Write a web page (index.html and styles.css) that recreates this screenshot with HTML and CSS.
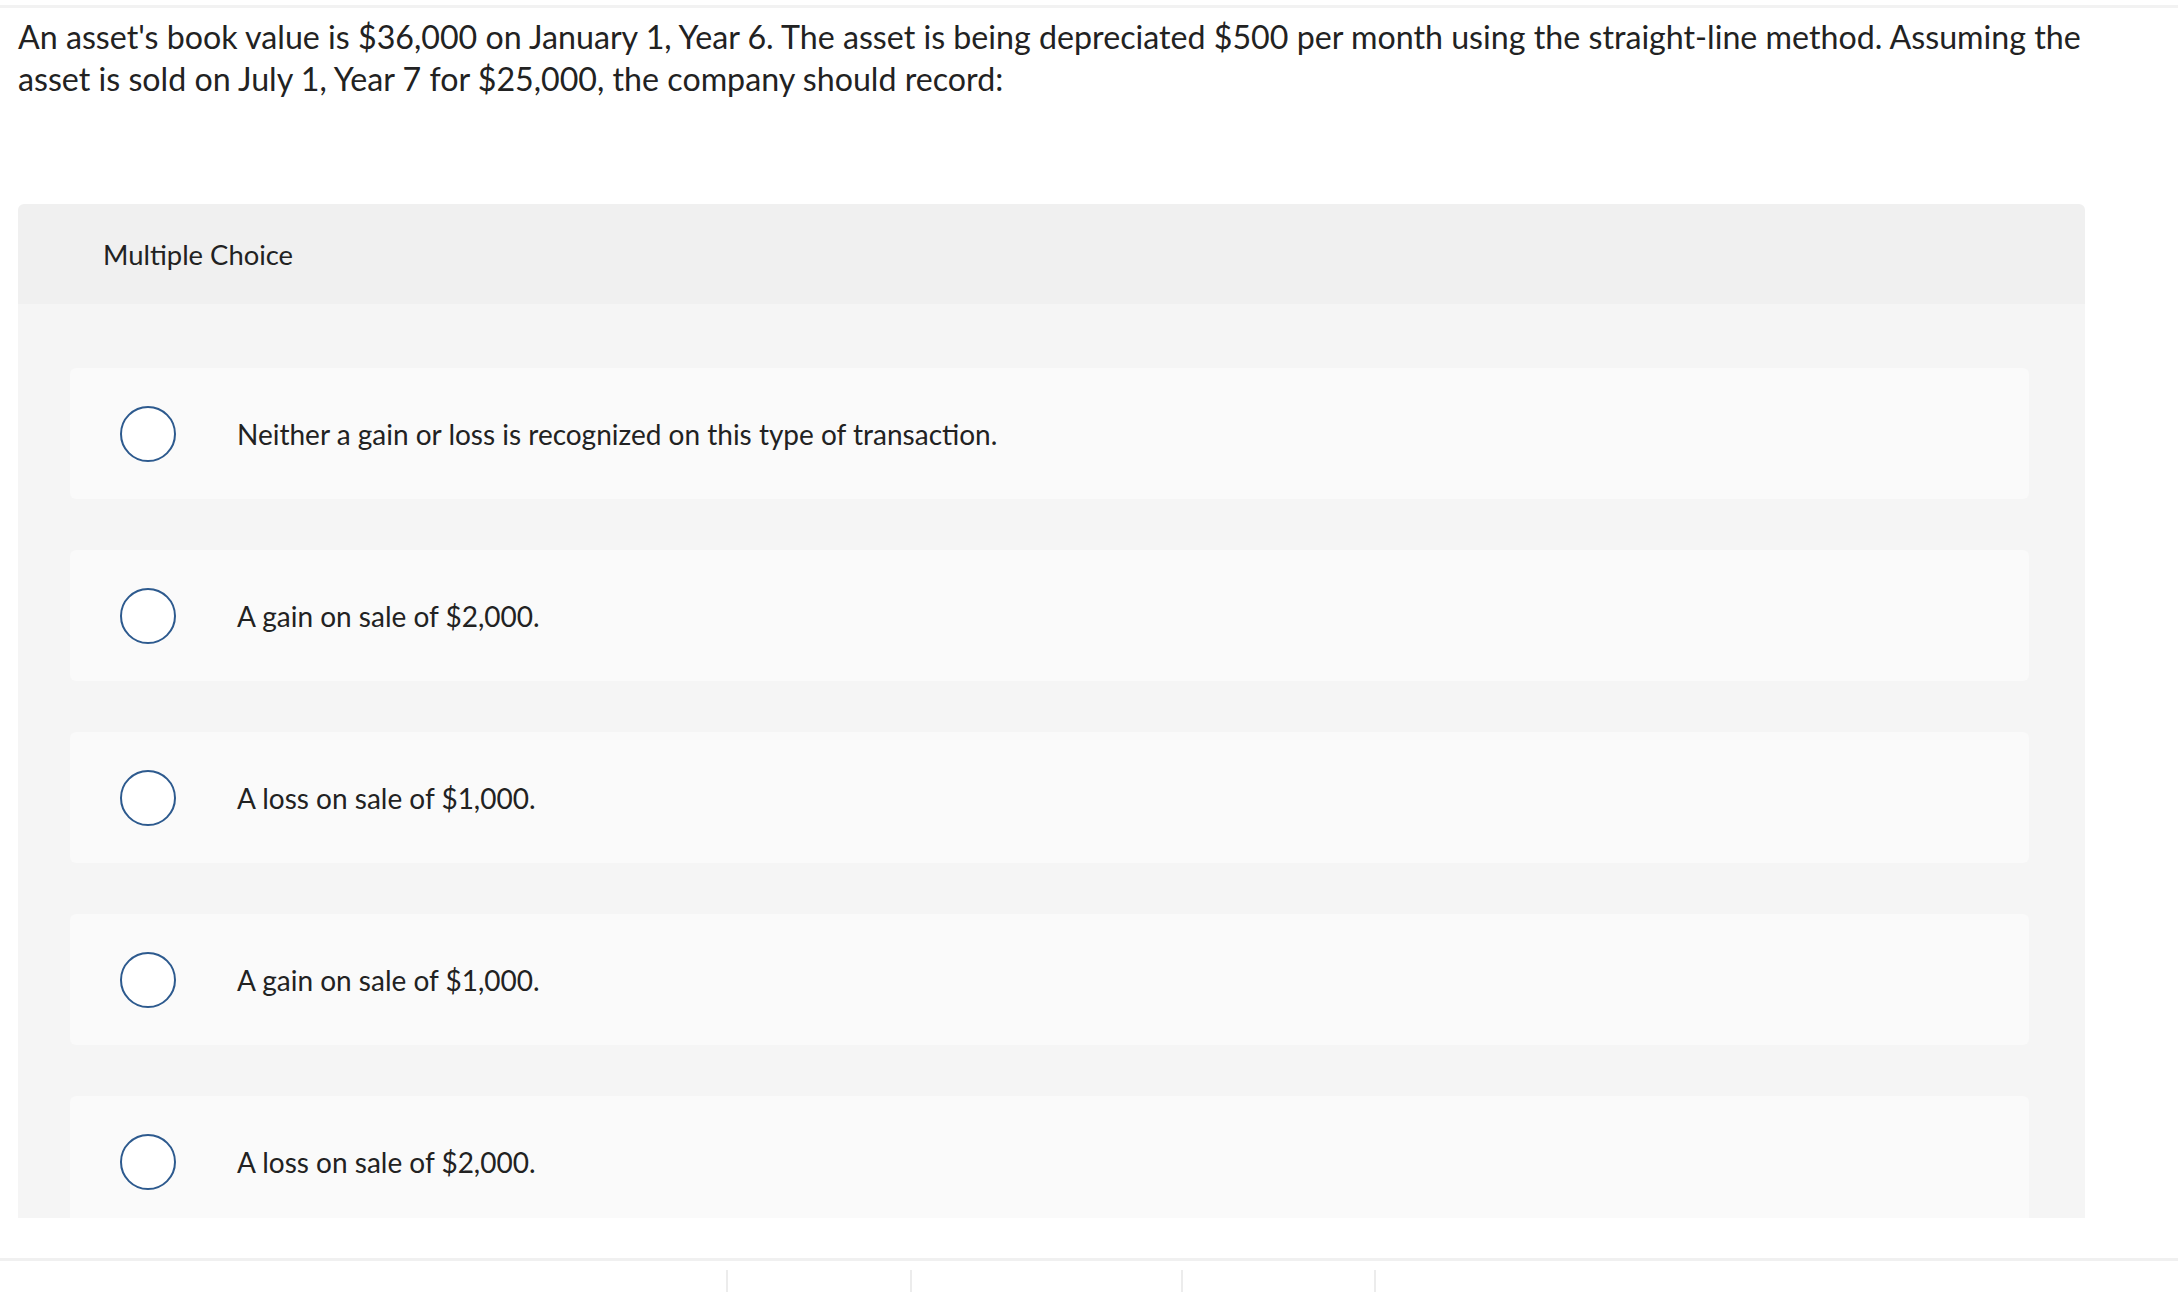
FILE: index.html
```html
<!DOCTYPE html>
<html lang="en">
<head>
<meta charset="utf-8">
<title>Multiple Choice</title>
<link rel="stylesheet" href="styles.css">
</head>
<body>
<div class="top-rule"></div>
<p class="question">An asset's book value is $36,000 on January 1, Year 6. The asset is being depreciated $500 per month using the straight-line method. Assuming the asset is sold on July 1, Year 7 for $25,000, the company should record:</p>

<section class="mc">
  <div class="mc-header">Multiple Choice</div>
  <div class="mc-body">
    <div class="choice"><span class="radio"></span><span class="choice-text">Neither a gain or loss is recognized on this type of transaction.</span></div>
    <div class="choice"><span class="radio"></span><span class="choice-text">A gain on sale of $2,000.</span></div>
    <div class="choice"><span class="radio"></span><span class="choice-text">A loss on sale of $1,000.</span></div>
    <div class="choice"><span class="radio"></span><span class="choice-text">A gain on sale of $1,000.</span></div>
    <div class="choice"><span class="radio"></span><span class="choice-text">A loss on sale of $2,000.</span></div>
  </div>
</section>

<footer class="footer">
  <span class="seg seg-a"></span>
  <span class="seg seg-b"></span>
  <span class="seg seg-c"></span>
  <span class="seg seg-d"></span>
</footer>
</body>
</html>
```

FILE: styles.css
```css
html, body {
  margin: 0;
  padding: 0;
  background: #ffffff;
}
body {
  font-family: "Lato", "Noto Sans", sans-serif;
  color: #222222;
  height: 1292px;
  overflow: hidden;
}
.top-rule {
  margin-top: 5px;
  height: 3px;
  background: #f2f2f2;
}
.question {
  margin: 8px 0 0 0;
  padding: 0 66px 0 18px;
  font-size: 32.2px;
  line-height: 42px;
}
.mc {
  margin: 104px 0 0 18px;
  width: 2067px;
}
.mc-header {
  height: 100px;
  box-sizing: border-box;
  padding-left: 85px;
  display: flex;
  align-items: center;
  background: #f0f0f0;
  border-radius: 6px 6px 0 0;
  font-size: 27.4px;
}
.mc-body {
  background: #f5f5f5;
  height: 914px;
  box-sizing: border-box;
  padding: 64px 56px 0 52px;
  overflow: hidden;
  display: flex;
  flex-direction: column;
  gap: 51px;
}
.choice {
  flex: 0 0 131px;
  background: #fafafa;
  border-radius: 6px;
  display: flex;
  align-items: center;
  padding-left: 50px;
}
.radio {
  flex: 0 0 auto;
  width: 56px;
  height: 56px;
  box-sizing: border-box;
  border: 2px solid #2d5a8e;
  border-radius: 50%;
  background: #ffffff;
}
.choice-text {
  margin-left: 61px;
  font-size: 28px;
}
.footer {
  margin-top: 40px;
  border-top: 3px solid #f0f0f0;
  padding-top: 9px;
  padding-left: 726px;
  display: flex;
  height: 40px;
}
.seg {
  border-left: 2px solid #ececec;
  height: 100%;
}
.seg-a { width: 182px; }
.seg-b { width: 269px; }
.seg-c { width: 191px; }
.seg-d { width: 10px; }
```
